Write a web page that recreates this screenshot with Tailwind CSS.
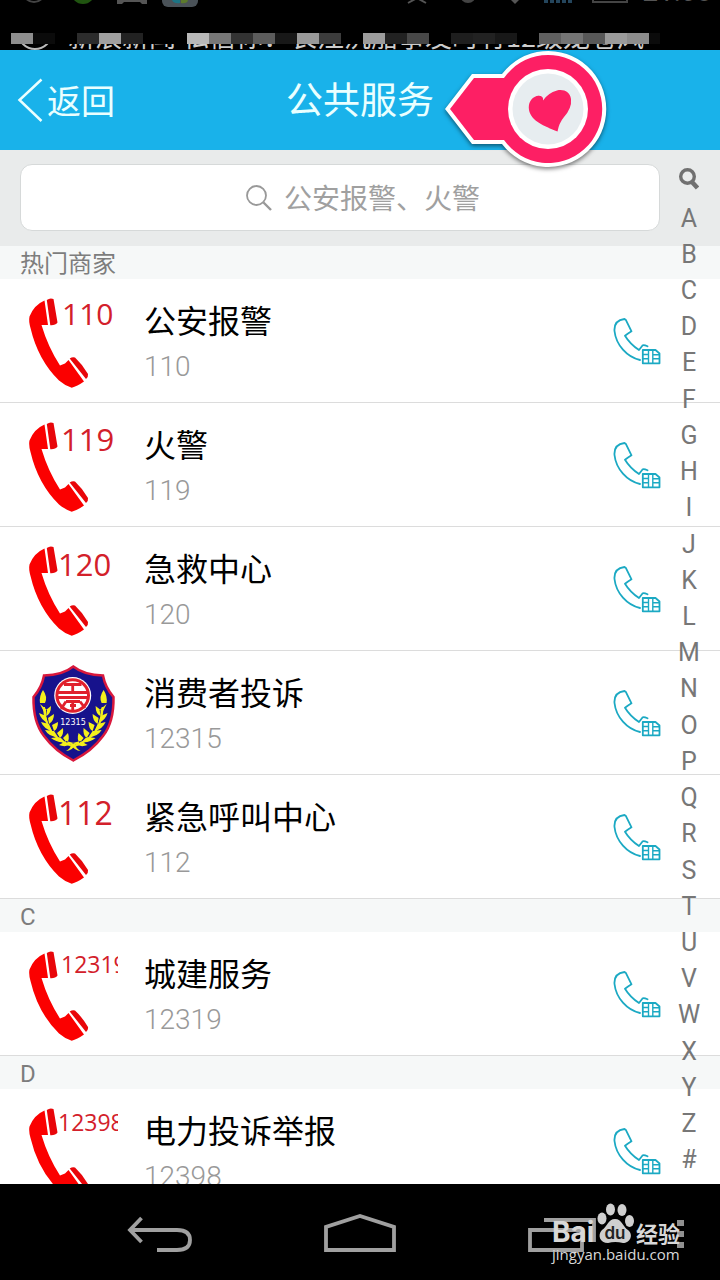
<!DOCTYPE html>
<html lang="zh-CN">
<head>
    <meta charset="utf-8"/>
    <meta content="width=device-width, initial-scale=1" name="viewport"/>
    <title>公共服务</title>
    <script src="https://cdn.jsdelivr.net/npm/@tailwindcss/browser@4"></script>
</head>
<body class="h-screen flex flex-col overflow-hidden bg-white font-[Roboto,'Noto_Sans_CJK_SC',sans-serif]">

<!-- shared icons -->
<svg class="hidden">
    <symbol id="handset" viewBox="0 0 98 100">
        <path fill="#fb0000" d="M24.500 9.500 28 34 21.500 34Q28 56 40 74.500L45 72.500 48.500 69 64 90.500Q57 95.500 51.700 96.700Q44 94 39 89.500Q18 69 10.500 37Q8.500 30 9.500 25.500Q14 14 24.500 9.500Z"/>
        <path fill="#e8060a" d="M26.800 9Q30 6.500 33.500 8L37.500 31.500Q35.500 34.500 30.300 34.200ZM49.700 67.500Q52.500 65.500 55 66.500Q62.500 73.500 68 83Q68.500 86 66 88Z"/>
    </symbol>
    <symbol id="call" viewBox="0 0 48 48">
        <g fill="none" stroke="#1ba9c3" stroke-width="1.800" stroke-linejoin="round" stroke-linecap="round">
            <path d="M27 43C14 40 3 28 1.500 14C1 7 4 3 11.500 2L12.700 2.700 18.500 14.300Q15 16.500 12 18.700Q17 27 26 33L29.500 28.500Q30.500 27.500 34.500 29.300"/>
            <path d="M29.800 33H42.500L46.500 36.500V46.300H29.800Z"/>
            <path stroke-width="1.400" d="M35.500 33.500V46M39.800 33.500V46M30 37.500H35.500M30 41.800H35.500M39.800 37.800H46M39.800 41.800H46"/>
        </g>
    </symbol>
</svg>

<div class="h-[50px] shrink-0 flex flex-col bg-black overflow-hidden">
    <div class="h-[33px] relative flex">
        <svg class="w-[220px] h-2" viewBox="0 0 220 8">
            <circle cx="34" cy="-9" r="11" fill="none" stroke="#444" stroke-width="2"/>
            <circle cx="83" cy="-8" r="12" fill="#205410"/>
            <path d="M117 0h30v4h-5l-2-2h-16l-2 2h-5z" fill="#555"/>
            <rect x="162" y="-20" width="36" height="27" rx="6" fill="#4a5258"/>
            <path d="M172 0h8v3q-6 1-8-3z" fill="#1c7484"/>
            <path d="M181 0h7q-1 4-7 3z" fill="#5c7a2c"/>
        </svg>
        <svg class="absolute right-[88px] top-0 w-[232px] h-2" viewBox="400 0 232 8">
            <path d="M408 3l9-5 9 5" fill="none" stroke="#555" stroke-width="2"/>
            <circle cx="468" cy="-5" r="8" fill="#444"/>
            <path d="M511 0h8l-4 4z" fill="#555"/>
            <path d="M544 0h4v3h-4zm6 0h4v3h-4zm6 0h4v3h-4zm6 0h4v3h-4zm6 0h4v3h-4z" fill="#24455c"/>
            <path d="M593 -4v6h34v-6" fill="none" stroke="#444" stroke-width="2"/>
        </svg>
        <span class="absolute right-2 -top-[22px] text-[28px] leading-[28px] text-[#555]">21:08</span>
    </div>
    <div class="h-[11px] flex pl-[11px]">
        <i class="w-[22px] bg-[#8e8e8e]"></i><i class="w-[22px] bg-[#0b0b0b]"></i><i class="w-[22px] bg-black"></i>
        <i class="w-[22px] bg-[#2c2c2c]"></i><i class="w-[22px] bg-[#a0a0a0]"></i><i class="w-[22px] bg-[#222222]"></i>
        <i class="w-[44px] bg-black"></i><i class="w-[22px] bg-[#b8b8b8]"></i><i class="w-[22px] bg-[#777777]"></i>
        <i class="w-[22px] bg-[#333333]"></i><i class="w-[22px] bg-[#5c5c5c]"></i><i class="w-[22px] bg-[#181818]"></i>
        <i class="w-[22px] bg-[#999999]"></i><i class="w-[22px] bg-[#3c3c3c]"></i><i class="w-[22px] bg-black"></i>
        <i class="w-[22px] bg-[#9c9c9c]"></i><i class="w-[22px] bg-[#222222]"></i><i class="w-[22px] bg-[#484848]"></i>
        <i class="w-[22px] bg-black"></i><i class="w-[22px] bg-[#1e1e1e]"></i><i class="w-[22px] bg-[#222222]"></i>
        <i class="w-[22px] bg-[#181818]"></i><i class="w-[22px] bg-black"></i><i class="w-[22px] bg-[#606060]"></i>
        <i class="w-[22px] bg-[#747474]"></i><i class="w-[22px] bg-[#585858]"></i><i class="w-[22px] bg-[#9a9a9a]"></i>
        <i class="w-[22px] bg-[#8c8c8c]"></i><i class="w-[11px] bg-[#0b0b0b]"></i>
    </div>
    <div class="h-[6px] flex items-end overflow-hidden">
        <svg class="w-[68px] h-[6px] shrink-0" viewBox="0 0 68 6"><circle cx="35" cy="-12" r="17" fill="none" stroke="#bbb" stroke-width="2"/></svg>
        <p class="font-['Noto_Sans_CJK_SC',sans-serif] text-[27px] leading-[28px] whitespace-nowrap text-[#cccccc]">新浪新闻 私信你：长江沉船事发时有12级龙卷风</p>
    </div>
</div>

<header class="relative h-[100px] shrink-0 flex items-center justify-center bg-[#19b2ea] text-[#eaffff]">
    <a href="#" class="absolute left-[17px] inset-y-0 flex items-center gap-1 text-[34px]">
        <svg class="w-[26px] h-[44px]" viewBox="0 0 26 44"><path d="M24.500 1.500 2.500 22 24.500 43" fill="none" stroke="currentColor" stroke-width="2.500"/></svg>
        <span class="pt-1">返回</span>
    </a>
    <h1 class="pt-1 text-[37px]">公共服务</h1>
    <!-- pin pointing at the title -->
    <svg class="absolute z-10 left-1/2 ml-20 -top-1 w-[172px] h-[128px]" viewBox="0 0 172 128" style="filter:drop-shadow(0 2px 2px rgb(0 0 0 / .5))">
        <path d="M5 63 32 28H62A58 58 0 1 1 62 98H32Z" fill="#fff"/>
        <path d="M10 63 34 32H64A54 54 0 1 1 64 94H34Z" fill="#fd1f64"/>
        <circle cx="108" cy="63" r="40" fill="#fff"/>
        <circle cx="108" cy="63" r="35.500" fill="#e7edf0"/>
        <path d="M103 54.500Q103.500 49 96.500 50C91 52 88 57 89 64C91 75 104 80 117.500 85.500Q119 77 124 71Q132 62 131 53C130 46 124 43 117 44.500Q108 47 103 54.500Z" fill="#fd1f64"/>
        <path d="M98.500 50.500Q103 51 102 54.500" fill="none" stroke="#fd1f64" stroke-width="1.500"/>
    </svg>
</header>

<main class="relative flex-1 min-h-0 overflow-hidden">
    <form class="h-24 pt-[14px] pl-5 pr-[60px] bg-[#e9ebeb]">
        <label class="h-[67px] flex items-center justify-center gap-3 pl-12 rounded-xl border border-[#d6d9d9] bg-white">
            <svg class="w-[26px] h-[26px]" viewBox="0 0 26 26" fill="none" stroke="#999" stroke-width="1.800"><circle cx="10.500" cy="10.500" r="9.500"/><path d="M17.500 17.500 25 25" stroke-width="2.400"/></svg>
            <input type="text" aria-label="搜索" placeholder="公安报警、火警" class="w-[198px] pt-1 text-[28px] outline-none placeholder:text-[#a0a0a0]"/>
        </label>
    </form>

    <h2 class="h-[33px] px-5 bg-[#f6f8f8] text-2xl leading-[36px] text-[#7d7d7d]">热门商家</h2>
    <ul>
        <li class="h-[124px] flex items-center gap-[26px] pl-5 pr-[59px] border-b border-[#dcdcdc]">
            <svg class="w-[98px] h-[100px]" viewBox="0 0 98 100"><use href="#handset"/><text x="42" y="34" font-size="30" fill="#d3202a" font-family="Open Sans">110</text></svg>
            <div class="flex-1 pt-2">
                <h3 class="text-[32px] leading-[44px] text-black">公安报警</h3>
                <p class="text-[28px] leading-[46px] font-light text-[#999999]">110</p>
            </div>
            <button aria-label="拨打 110"><svg class="w-12 h-12"><use href="#call"/></svg></button>
        </li>
        <li class="h-[124px] flex items-center gap-[26px] pl-5 pr-[59px] border-b border-[#dcdcdc]">
            <svg class="w-[98px] h-[100px]" viewBox="0 0 98 100"><use href="#handset"/><text x="41" y="36" font-size="31" fill="#d3202a" font-family="Open Sans">119</text></svg>
            <div class="flex-1 pt-2">
                <h3 class="text-[32px] leading-[44px] text-black">火警</h3>
                <p class="text-[28px] leading-[46px] font-light text-[#999999]">119</p>
            </div>
            <button aria-label="拨打 119"><svg class="w-12 h-12"><use href="#call"/></svg></button>
        </li>
        <li class="h-[124px] flex items-center gap-[26px] pl-5 pr-[59px] border-b border-[#dcdcdc]">
            <svg class="w-[98px] h-[100px]" viewBox="0 0 98 100"><use href="#handset"/><text x="38" y="37" font-size="31" fill="#d3202a" font-family="Open Sans">120</text></svg>
            <div class="flex-1 pt-2">
                <h3 class="text-[32px] leading-[44px] text-black">急救中心</h3>
                <p class="text-[28px] leading-[46px] font-light text-[#999999]">120</p>
            </div>
            <button aria-label="拨打 120"><svg class="w-12 h-12"><use href="#call"/></svg></button>
        </li>
        <li class="h-[124px] flex items-center gap-[26px] pl-5 pr-[59px] border-b border-[#dcdcdc]">
            <svg class="w-[98px] h-[100px]" viewBox="0 0 98 100">
                <path d="M53.300 3.500Q64 12 83 12.500Q85 24 93.500 34Q94 59 83 73Q72 88 53.300 97.500Q35 88 24 73Q13 59 13.500 34Q22 24 24 12.500Q43 12 53.300 3.500Z" fill="#17128c" stroke="#d9183c" stroke-width="2.500"/>
                <circle cx="52.700" cy="32.500" r="18.500" fill="#fff"/>
                <circle cx="52.700" cy="32.500" r="15.800" fill="none" stroke="#e0202c" stroke-width="3"/>
                <path d="M44 21.500H61.500M52.700 21.500V29M37 29.500H68.500M37 34.500H68.500M46 38.500H60M46 38.500 41 46M50 42.500H56M52.700 39V47M60 38.500 65 45" fill="none" stroke="#e0202c" stroke-width="2.800"/>
                <text x="53" y="62" font-size="8" text-anchor="middle" fill="#fff" font-family="DejaVu Sans">12315</text>
                <g id="laurel">
                    <path d="M24 44Q25 74 52 83" fill="none" stroke="#e9e91c" stroke-width="2"/>
                    <path fill="#f4f01c" d="M23 27Q28 34 25 40L20 40Q19 33 23 27ZM20 41 26 53 27 47ZM31 43Q31 51 26 53L26 47ZM19 50Q21 57 28 60L26 53ZM34 51Q34 58 29 61L28 55ZM21 59Q24 66 32 68L29 61ZM38 59Q38 66 34 68L32 62ZM25 67Q29 74 38 74L34 68ZM43 65Q44 72 40 75L37 70ZM31 75Q37 80 45 79L40 74ZM48 70Q50 76 47 80L43 75ZM39 82Q46 85 54 80L46 78ZM46 88Q50 86 52 81L56 81Q52 88 46 88Z"/>
                </g>
                <use href="#laurel" transform="translate(106.600 0) scale(-1 1)"/>
            </svg>
            <div class="flex-1 pt-2">
                <h3 class="text-[32px] leading-[44px] text-black">消费者投诉</h3>
                <p class="text-[28px] leading-[46px] font-light text-[#999999]">12315</p>
            </div>
            <button aria-label="拨打 12315"><svg class="w-12 h-12"><use href="#call"/></svg></button>
        </li>
        <li class="h-[124px] flex items-center gap-[26px] pl-5 pr-[59px] border-b border-[#dcdcdc]">
            <svg class="w-[98px] h-[100px]" viewBox="0 0 98 100"><use href="#handset"/><text x="38" y="38" font-size="32" fill="#d3202a" font-family="Open Sans">112</text></svg>
            <div class="flex-1 pt-2">
                <h3 class="text-[32px] leading-[44px] text-black">紧急呼叫中心</h3>
                <p class="text-[28px] leading-[46px] font-light text-[#999999]">112</p>
            </div>
            <button aria-label="拨打 112"><svg class="w-12 h-12"><use href="#call"/></svg></button>
        </li>
    </ul>

    <h2 class="h-[33px] px-5 bg-[#f6f8f8] text-2xl leading-[36px] text-[#7d7d7d]">C</h2>
    <ul>
        <li class="h-[124px] flex items-center gap-[26px] pl-5 pr-[59px] border-b border-[#dcdcdc]">
            <svg class="w-[98px] h-[100px] overflow-hidden" viewBox="0 0 98 100"><use href="#handset"/><text x="41" y="29" font-size="23" fill="#d3202a" font-family="Open Sans">12319</text></svg>
            <div class="flex-1 pt-2">
                <h3 class="text-[32px] leading-[44px] text-black">城建服务</h3>
                <p class="text-[28px] leading-[46px] font-light text-[#999999]">12319</p>
            </div>
            <button aria-label="拨打 12319"><svg class="w-12 h-12"><use href="#call"/></svg></button>
        </li>
    </ul>

    <h2 class="h-[33px] px-5 bg-[#f6f8f8] text-2xl leading-[36px] text-[#7d7d7d]">D</h2>
    <ul>
        <li class="h-[124px] flex items-center gap-[26px] pl-5 pr-[59px] border-b border-[#dcdcdc]">
            <svg class="w-[98px] h-[100px] overflow-hidden" viewBox="0 0 98 100"><use href="#handset"/><text x="38" y="30" font-size="23" fill="#d3202a" font-family="Open Sans">12398</text></svg>
            <div class="flex-1 pt-2">
                <h3 class="text-[32px] leading-[44px] text-black">电力投诉举报</h3>
                <p class="text-[28px] leading-[46px] font-light text-[#999999]">12398</p>
            </div>
            <button aria-label="拨打 12398"><svg class="w-12 h-12"><use href="#call"/></svg></button>
        </li>
    </ul>

    <!-- A-Z index floats over the list -->
    <nav class="absolute right-4 inset-y-0 w-[30px] pt-2 pb-[6px] flex flex-col items-center text-[25px] leading-none text-[#777777]">
        <a href="#" aria-label="搜索" class="h-[42px] flex items-center">
            <svg class="w-5 h-[22px]" viewBox="0 0 20 22" fill="none" stroke="#707070"><circle cx="8.500" cy="8.500" r="6.800" stroke-width="3.400"/><path d="M13 14 18.500 20" stroke-width="4.500"/></svg>
        </a>
        <a href="#" class="flex-1 flex items-center">A</a>
        <a href="#" class="flex-1 flex items-center">B</a>
        <a href="#" class="flex-1 flex items-center">C</a>
        <a href="#" class="flex-1 flex items-center">D</a>
        <a href="#" class="flex-1 flex items-center">E</a>
        <a href="#" class="flex-1 flex items-center">F</a>
        <a href="#" class="flex-1 flex items-center">G</a>
        <a href="#" class="flex-1 flex items-center">H</a>
        <a href="#" class="flex-1 flex items-center">I</a>
        <a href="#" class="flex-1 flex items-center">J</a>
        <a href="#" class="flex-1 flex items-center">K</a>
        <a href="#" class="flex-1 flex items-center">L</a>
        <a href="#" class="flex-1 flex items-center">M</a>
        <a href="#" class="flex-1 flex items-center">N</a>
        <a href="#" class="flex-1 flex items-center">O</a>
        <a href="#" class="flex-1 flex items-center">P</a>
        <a href="#" class="flex-1 flex items-center">Q</a>
        <a href="#" class="flex-1 flex items-center">R</a>
        <a href="#" class="flex-1 flex items-center">S</a>
        <a href="#" class="flex-1 flex items-center">T</a>
        <a href="#" class="flex-1 flex items-center">U</a>
        <a href="#" class="flex-1 flex items-center">V</a>
        <a href="#" class="flex-1 flex items-center">W</a>
        <a href="#" class="flex-1 flex items-center">X</a>
        <a href="#" class="flex-1 flex items-center">Y</a>
        <a href="#" class="flex-1 flex items-center">Z</a>
        <a href="#" class="flex-1 flex items-center">#</a>
    </nav>
</main>

<footer class="relative h-24 shrink-0 bg-black">
    <div class="h-full px-[60px] grid grid-cols-3">
        <button aria-label="返回" class="flex items-center justify-center">
            <svg class="w-[68px] h-12" viewBox="0 0 68 48" fill="none" stroke="#a0a0a0" stroke-width="3.800"><path d="M4 22H51Q64 22 64 32Q64 42 51 42H31"/><path d="M15.500 10 4 22 15.500 34"/></svg>
        </button>
        <button aria-label="主屏幕" class="flex items-center justify-center">
            <svg class="w-[72px] h-12" viewBox="0 0 72 48" fill="none" stroke="#a0a0a0" stroke-width="3.800"><path d="M2 42V19L36 8 70 19V42Z"/></svg>
        </button>
        <button aria-label="最近任务" class="flex items-center justify-center">
            <svg class="w-[72px] h-12" viewBox="0 0 72 48" fill="none" stroke="#a0a0a0" stroke-width="3.800"><path d="M6 22H58V42H6ZM20 12H70V34"/></svg>
        </button>
    </div>
    <button aria-label="菜单" class="absolute right-9 top-9">
        <svg class="w-[7px] h-7" viewBox="0 0 7 28" fill="#909090"><path d="M0 0h7v6H0zM0 11h7v6H0zM0 22h7v6H0z"/></svg>
    </button>
    <div class="absolute right-10 top-[18px] w-[128px] text-[#d8d8d8]">
        <div class="h-[42px] flex items-end justify-between">
            <span class="font-[Inter,sans-serif] font-bold text-[28px] leading-[24px]">Bai</span>
            <svg class="w-[38px] h-[42px]" viewBox="0 0 38 42" fill="#cfcfcf">
                <ellipse cx="6" cy="16.500" rx="4.500" ry="6"/><ellipse cx="14.500" cy="7.500" rx="4.500" ry="6"/><ellipse cx="26" cy="8" rx="4.500" ry="6"/><ellipse cx="33.500" cy="19" rx="4.500" ry="6"/>
                <path d="M19 17C26 17 27 25 32 28C38 33 34 41 27 41Q19 39 12 41C4 41 1 33 6 28C12 24 12 17 19 17Z"/>
                <text x="19" y="37" text-anchor="middle" font-family="Inter" font-weight="600" font-size="17" fill="#222">du</text>
            </svg>
            <span class="font-['Noto_Sans_CJK_SC',sans-serif] font-bold text-[22px] leading-[24px]">经验</span>
        </div>
        <p class="font-['Open_Sans',sans-serif] text-[15px] leading-[20px]">jingyan.baidu.com</p>
    </div>
</footer>
</body>
</html>
